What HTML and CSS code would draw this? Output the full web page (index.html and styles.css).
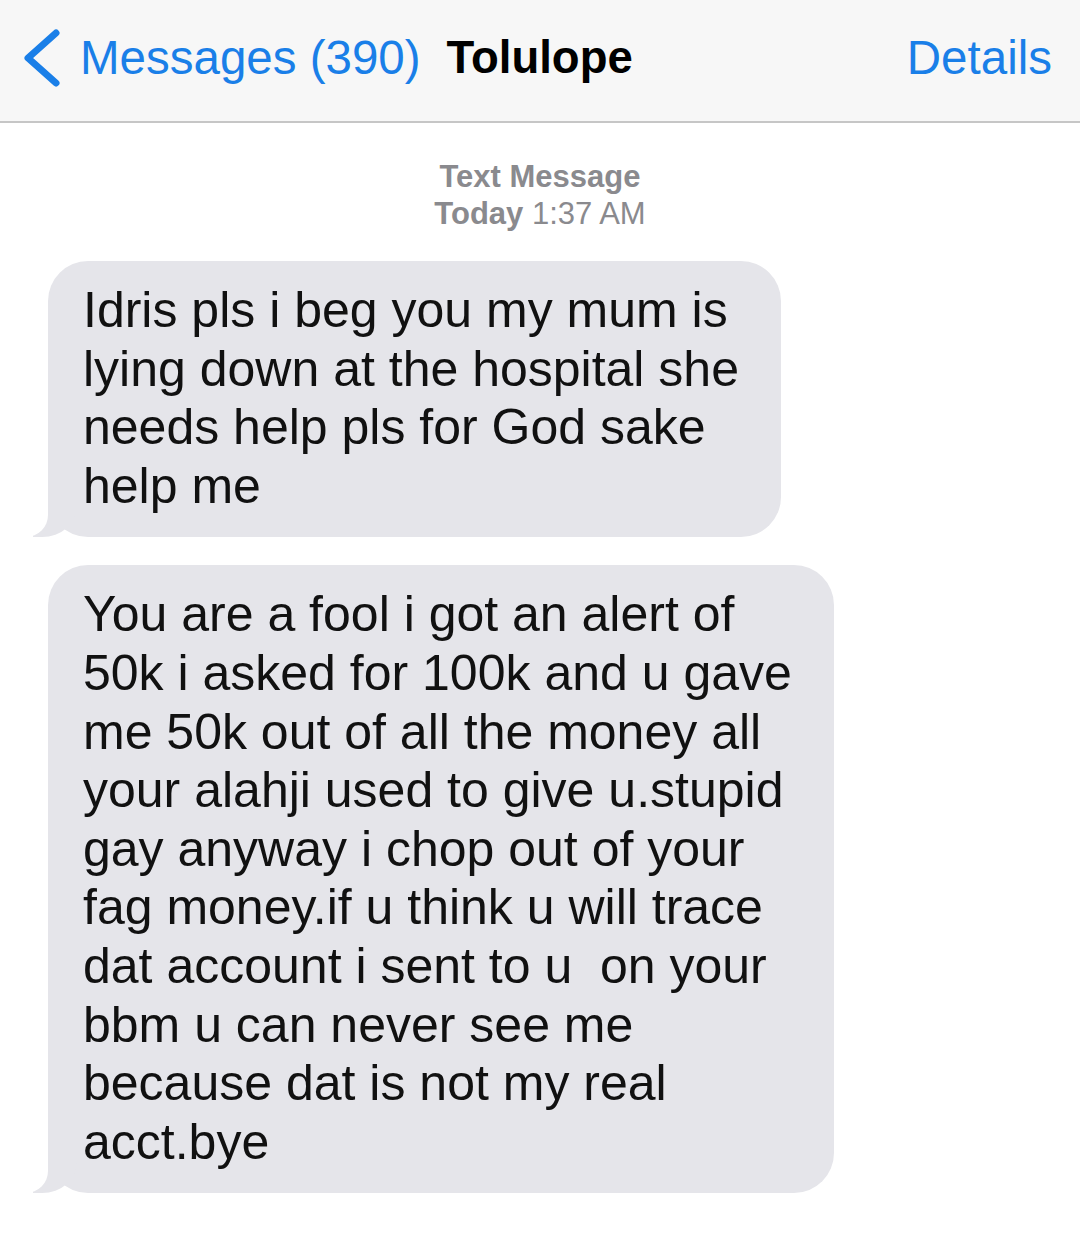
FILE: index.html
```html
<!DOCTYPE html>
<html lang="en">
<head>
    <meta charset="UTF-8">
    <meta name="viewport" content="width=device-width, initial-scale=1.0">
    <title>Tolulope</title>
    <link rel="stylesheet" href="styles.css">
</head>
<body>
    <div class="nav-bar">
        <a class="back-link" href="#">
            <svg class="chevron" width="42" height="60" viewBox="0 0 42 60">
                <polyline points="34,4 6,29 34,54" fill="none" stroke="#1a7fe8" stroke-width="7" stroke-linecap="round" stroke-linejoin="round"/>
            </svg>
            <span>Messages (390)</span>
        </a>
        <span class="contact-name">Tolulope</span>
        <a class="details-link" href="#">Details</a>
    </div>

    <div class="thread">
        <div class="timestamp">
            <div class="timestamp-type">Text Message</div>
            <div><b>Today</b> 1:37 AM</div>
        </div>

        <div class="bubble">Idris pls i beg you my mum is<br>lying down at the hospital she<br>needs help pls for God sake<br>help me</div>

        <div class="bubble">You are a fool i got an alert of<br>50k i asked for 100k and u gave<br>me 50k out of all the money all<br>your alahji used to give u.stupid<br>gay anyway i chop out of your<br>fag money.if u think u will trace<br>dat account i sent to u &nbsp;on your<br>bbm u can never see me<br>because dat is not my real<br>acct.bye</div>
    </div>
</body>
</html>
```

FILE: styles.css
```css
body {
    margin: 0;
    background: #fff;
    font-family: 'Liberation Sans', Arial, sans-serif;
    color: #111;
}

.nav-bar {
    display: flex;
    align-items: flex-start;
    height: 123px;
    box-sizing: border-box;
    padding: 31px 28px 0 22px;
    background: #f7f7f7;
    border-bottom: 2px solid #c6c6c6;
    font-size: 47.5px;
    line-height: 54px;
}

.back-link {
    display: flex;
    align-items: flex-start;
    color: #1a7fe8;
    text-decoration: none;
}

.chevron {
    margin: -2px 16px 0 0;
}

.contact-name {
    margin-left: 26px;
    font-size: 45.5px;
    font-weight: bold;
    color: #000;
}

.details-link {
    margin-left: auto;
    color: #1a7fe8;
    text-decoration: none;
}

.thread {
    display: flex;
    flex-direction: column;
    align-items: flex-start;
    padding: 0 0 40px 48px;
}

.timestamp {
    align-self: stretch;
    margin: 35px 48px 29px 0;
    text-align: center;
    font-size: 31px;
    line-height: 37px;
    color: #8a8a8e;
}

.timestamp-type {
    font-weight: bold;
}

.bubble {
    position: relative;
    width: fit-content;
    padding: 20px 42px 22px 35px;
    margin-bottom: 28px;
    background: #e5e5ea;
    border-radius: 40px;
    font-size: 50px;
    line-height: 58.6px;
    white-space: nowrap;
}

/* tail at the bottom left */
.bubble::before {
    content: "";
    position: absolute;
    left: -15px;
    bottom: 0;
    width: 44px;
    height: 44px;
    background: #e5e5ea;
    border-bottom-right-radius: 35px 31px;
}

.bubble::after {
    content: "";
    position: absolute;
    left: -57px;
    bottom: 0;
    width: 57px;
    height: 44px;
    background: #fff;
    border-bottom-right-radius: 22px;
}
```
